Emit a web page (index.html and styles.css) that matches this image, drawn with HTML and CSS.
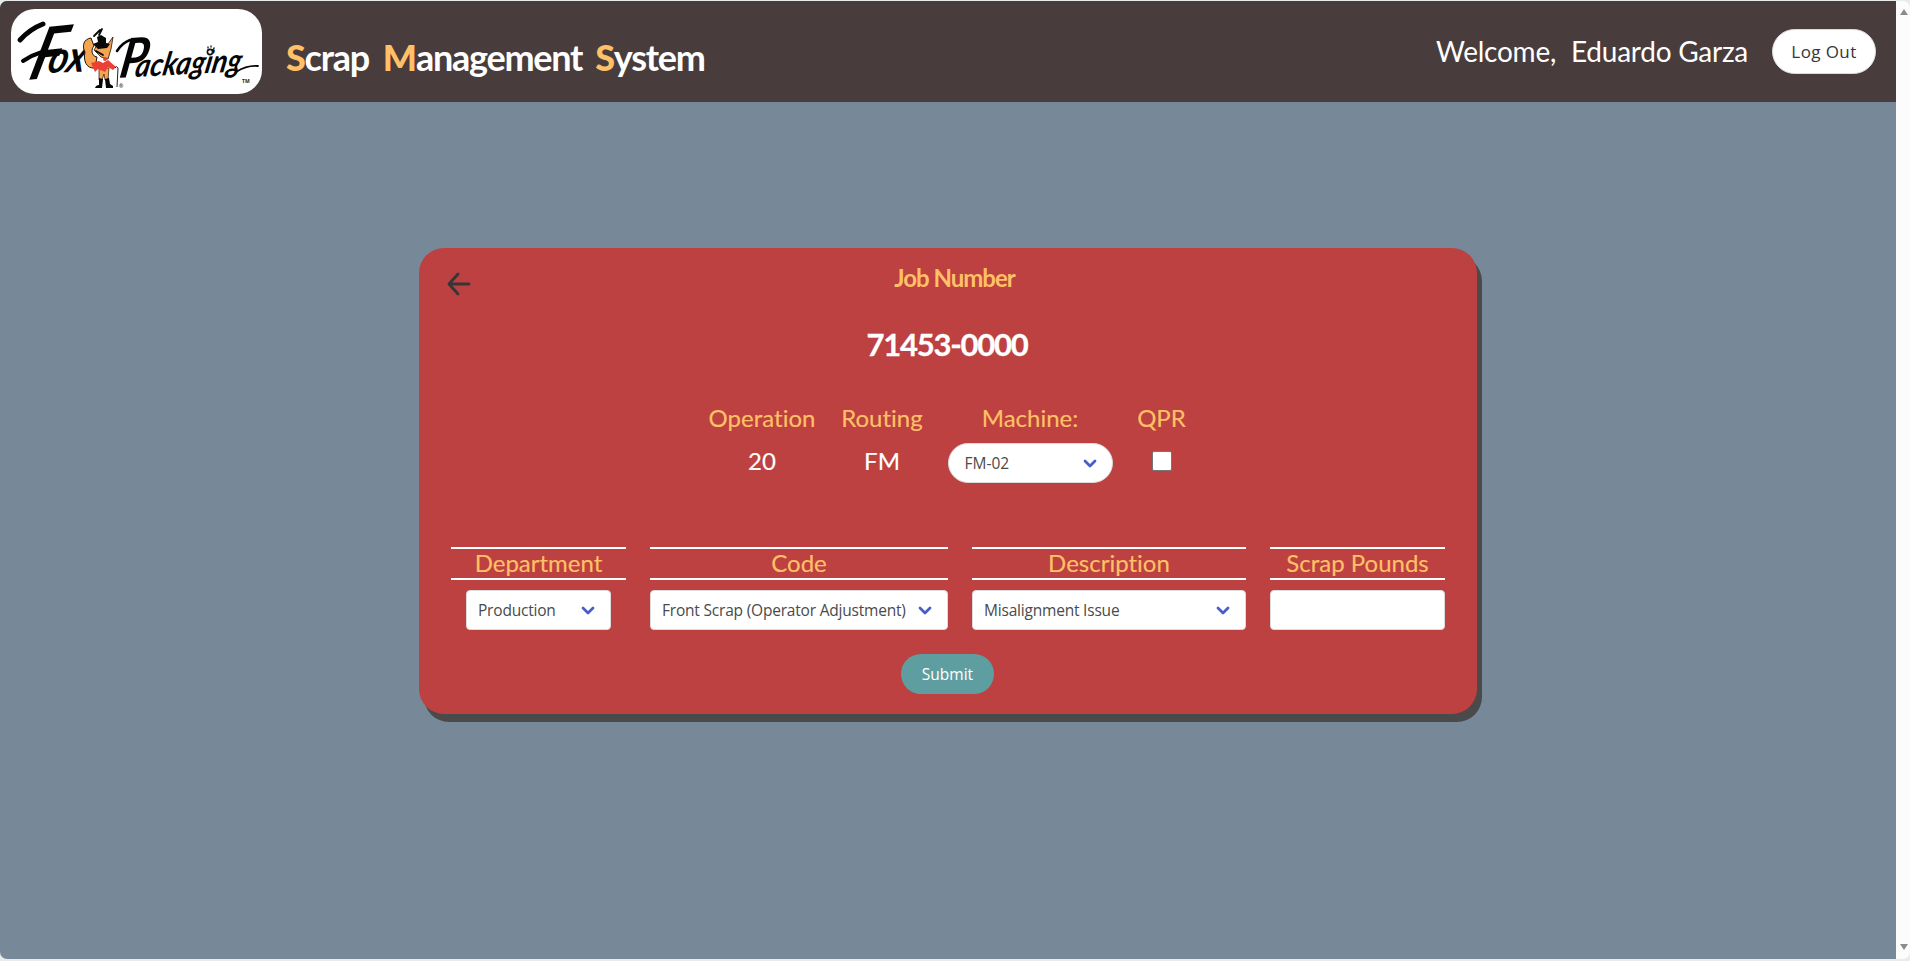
FILE: index.html
```html
<!DOCTYPE html>
<html lang="en">
<head>
<meta charset="utf-8">
<title>Scrap Management System</title>
<link rel="stylesheet" href="styles.css">
</head>
<body>
<div class="window">
  <div class="page">
    <header class="topbar">
      <svg class="logo" viewBox="11 9 251 85" role="img" aria-label="Fox Packaging">
        <g class="logo-text">
          <text class="logo-f" transform="translate(27 80) rotate(-6) skewX(-22)" textLength="31" lengthAdjust="spacingAndGlyphs">F</text>
          <text class="logo-ox" transform="translate(46 73) rotate(-2) skewX(-16)" textLength="37" lengthAdjust="spacingAndGlyphs">ox</text>
          <text class="logo-p" transform="translate(118 78) rotate(-4) skewX(-14)" textLength="27" lengthAdjust="spacingAndGlyphs">P</text>
          <text class="logo-rest" transform="translate(134 77) rotate(-3) skewX(-14)" textLength="106" lengthAdjust="spacingAndGlyphs">ackaging</text>
        </g>
        <path d="M236 72 Q247 65 258 66" fill="none" stroke="#050505" stroke-width="1.8" stroke-linecap="round"/>
        <path d="M20 40 Q30 29 43 24" fill="none" stroke="#050505" stroke-width="5" stroke-linecap="round"/>
        <path d="M23 61 Q32 55 42 52" fill="none" stroke="#050505" stroke-width="4" stroke-linecap="round"/>
        <path d="M117 51 Q122 43 130 40" fill="none" stroke="#050505" stroke-width="2.5" stroke-linecap="round"/>
        <path d="M91 38 C83 39 82 47 85 52 C83 60 86 69 95 68 L97 57 C91 56 91 49 94 46 Z" fill="#f5a451" stroke="#241509" stroke-width="1"/>
        <path d="M97 45 L108 44 L113 37 L111 49 L108 59 L101 57 L94 50 Z" fill="#f5a451" stroke="#241509" stroke-width=".8"/>
        <path d="M99 68 H109 L108 80 H105 L104 74 L102 80 H99 Z" fill="#f5a451" stroke="#241509" stroke-width=".7"/>
        <path d="M93 44 L98 42 L97 37 L101 35 L106 38 L106 43 L110 44 L107 48 L98 49 Z" fill="#080808"/>
        <path d="M94 36 L100 30 M99 35 L102 29 M96 51 L103 55" stroke="#080808" stroke-width="1.8" stroke-linecap="round"/>
        <path d="M91 63 L99 61 L103 63 L108 60 L116 67 L113 70 L108 67 L105 72 L98 69 L95 72 Z" fill="#ee3f36"/>
        <circle cx="105" cy="59" r="2" fill="#ee3f36"/>
        <path d="M99 78 L103 79 L102 88 H95 Q96 85 99 85 Z M105 79 L109 78 L110 84 L113 86 V88 H106 Z" fill="#050505"/>
        <path d="M115 68 Q116 65 118 68 L117 87" fill="none" stroke="#222" stroke-width="1"/>
        <circle cx="210" cy="52" r="2.6" fill="#fff" stroke="#111" stroke-width="1.6"/>
        <path d="M208 48 v-1 M211 47 v-1 M213.500 49 l.6-1" stroke="#333" stroke-width="1.5" stroke-linecap="round"/>
        <text class="logo-mark" x="119" y="88">®</text>
        <text class="logo-mark" x="242" y="83">TM</text>
      </svg>
      <h1 class="title"><span class="word word-scrap"><b>S</b>crap</span><span class="word word-management"><b>M</b>anagement</span><span class="word"><b>S</b>ystem</span></h1>
      <div class="account">
        <span class="welcome">Welcome,</span>
        <span class="user">Eduardo Garza</span>
        <button class="logout" type="button">Log Out</button>
      </div>
    </header>
    <main class="content">
      <section class="card">
        <svg class="back" viewBox="0 0 24 26" role="img" aria-label="Back"><path d="M22 13 H2 M11 3 L2 13 L11 23" /></svg>
        <h2 class="job-label">Job Number</h2>
        <p class="job-number">71453-0000</p>
        <div class="job-info">
          <div class="info operation"><span class="label">Operation</span><span class="value">20</span></div>
          <div class="info routing"><span class="label">Routing</span><span class="value">FM</span></div>
          <div class="info machine"><span class="label">Machine:</span>
            <div class="select rounded"><span>FM-02</span><svg class="chevron" viewBox="0 0 14 9"><path d="M2 2 L7 7 L12 2"/></svg></div>
          </div>
          <div class="info qpr"><span class="label">QPR</span><span class="checkbox"></span></div>
        </div>
        <div class="fields">
          <div class="field"><span class="head">Department</span>
            <div class="select dept"><span>Production</span><svg class="chevron" viewBox="0 0 14 9"><path d="M2 2 L7 7 L12 2"/></svg></div></div>
          <div class="field"><span class="head">Code</span>
            <div class="select"><span>Front Scrap (Operator Adjustment)</span><svg class="chevron" viewBox="0 0 14 9"><path d="M2 2 L7 7 L12 2"/></svg></div></div>
          <div class="field"><span class="head">Description</span>
            <div class="select"><span>Misalignment Issue</span><svg class="chevron" viewBox="0 0 14 9"><path d="M2 2 L7 7 L12 2"/></svg></div></div>
          <div class="field"><span class="head">Scrap Pounds</span><div class="select"></div></div>
        </div>
        <button class="submit" type="button">Submit</button>
      </section>
    </main>
  </div>
  <div class="scrollbar">
    <svg viewBox="0 0 10 8"><path d="M5 1 L9 7 H1 Z"/></svg>
    <svg viewBox="0 0 10 8"><path d="M5 7 L1 1 H9 Z"/></svg>
  </div>
</div>
</body>
</html>
```
FILE: styles.css
```css
* { box-sizing: border-box; }
body { margin: 0; background: #e9eced; font-family: Lato, sans-serif; font-variant-ligatures: none; height: 961px; overflow: hidden; padding: 1px 0 2px; }
h1, h2, p { margin: 0; }
.window { display: flex; height: 958px; border-radius: 7px; overflow: hidden; background: #fcfcfc; }
.page { width: 1896px; background: #778899; display: flex; flex-direction: column; }
.topbar { height: 101px; background: #483d3c; display: flex; align-items: flex-start; padding: 8px 20px 0 11px; }
.logo { width: 251px; height: 85px; background: #fff; border-radius: 24px; flex: none; overflow: visible; }
.logo-text { font-family: Lato, sans-serif; font-style: italic; font-weight: 700; fill: #050505; }
.logo-f { font-size: 70px; }
.logo-ox { font-size: 44px; }
.logo-p { font-size: 54px; }
.logo-rest { font-size: 32px; }
.logo-mark { font: 700 5px "Open Sans", sans-serif; fill: #222; }
.title { display: flex; color: #fff; font-size: 36px; font-weight: 700; line-height: 44px; letter-spacing: -1.25px; margin: 26px 0 0 24px; }
.word b { color: #ffc067; }
.word-scrap { margin-right: 14px; }
.word-management { margin-right: 13px; }
.account { display: flex; margin-left: auto; color: #fff; font-size: 28px; line-height: 34px; padding-top: 20px; align-items: flex-start; }
.welcome, .user { padding-top: 5px; letter-spacing: -.25px; }
.welcome { margin-right: 15px; }
.user { margin-right: 24px; }
.logout { width: 104px; height: 45px; border: 1px solid #dbdbdb; border-radius: 23px; background: #fff; color: #363636; font: 17px "Open Sans", sans-serif; letter-spacing: .4px; padding: 0; }
.content { display: flex; justify-content: center; padding-top: 146px; }
.card { position: relative; width: 1058px; height: 466px; background: #bc4140; border-radius: 25px; box-shadow: 5px 8px 0 #4a4a4a; display: flex; flex-direction: column; align-items: center; }
.back { position: absolute; left: 28px; top: 23px; width: 24px; height: 26px; fill: none; stroke: #363636; stroke-width: 2.8; stroke-linecap: round; stroke-linejoin: round; }
.job-label { color: #ffc067; font-size: 24px; line-height: 30px; letter-spacing: -1px; margin: 15px 0 0 13px; }
.job-number { color: #fff; font-weight: 700; font-size: 31px; line-height: 40px; letter-spacing: -1.25px; margin: 31px 0 0 -2px; -webkit-text-stroke: .3px #fff; }
.job-info { display: flex; gap: 24px; margin: 39px 2px 0 0; }
.info { display: flex; flex-direction: column; align-items: center; height: 88px; }
.label, .value, .head { font-size: 24px; -webkit-text-stroke: .15px currentColor; }
.label { color: #ffc067; line-height: 30px; }
.value { color: #fff; line-height: 30px; margin-top: 13px; }
.operation { width: 109px; }
.routing { width: 83px; }
.machine { width: 165px; }
.qpr { width: 50px; }
.select { height: 40px; width: 100%; background: #fff; border: 1px solid #dbdbdb; border-radius: 4px; color: #4a4a4a; font-family: "Open Sans", sans-serif; font-size: 15.500px; letter-spacing: -.2px; display: flex; align-items: center; justify-content: space-between; padding: 0 15px 0 11px; white-space: nowrap; }
.rounded { border-radius: 20px; margin-top: 10px; padding-left: 16px; letter-spacing: 0; }
.chevron { width: 14px; height: 9px; fill: none; stroke: #485fc7; stroke-width: 2.8; stroke-linecap: round; stroke-linejoin: round; flex: none; }
.checkbox { width: 20px; height: 20px; background: #fff; border: 1px solid #767676; border-radius: 2px; margin-top: 18px; }
.fields { display: grid; grid-template-columns: 175px 298px 274px 175px; gap: 24px; margin: 56px 0 24px; }
.field { display: flex; flex-direction: column; align-items: center; }
.head { width: 100%; height: 33px; border: solid #fff; border-width: 2px 0; color: #ffc067; line-height: 27px; text-align: center; margin-bottom: 10px; }
.dept { width: 145px; }
.submit { width: 93px; height: 40px; border: 0; border-radius: 20px; background: #5f9ea0; color: #fff; font: 15.500px "Open Sans", sans-serif; padding: 0; margin-right: 1px; }
.scrollbar { width: 14px; display: flex; flex-direction: column; justify-content: space-between; align-items: center; padding: 7px 0 8px 1px; }
.scrollbar svg { width: 10px; height: 8px; fill: #8b8b8b; }
```
